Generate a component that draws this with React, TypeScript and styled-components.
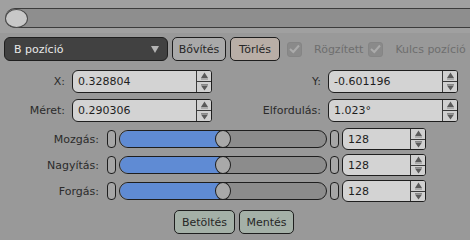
import React from "react";
import styled, { createGlobalStyle } from "styled-components";

const Global = createGlobalStyle`
  html, body { margin: 0; padding: 0; background: #999999; }
  body { font-family: "DejaVu Sans", sans-serif; font-size: 11px; color: #2b2b2b; }
  * { box-sizing: border-box; }
`;

const Page = styled.div`
  width: 470px;
  height: 240px;
  overflow: hidden;
  background: #999999;
`;

const Header = styled.div`
  background: #a0a0a0;
  padding: 8px 0 5px 5px;
`;

const Track = styled.div`
  height: 20px;
  background: #8e8e8e;
  border-top: 1px solid #3c3c3c;
  border-bottom: 1px solid #3c3c3c;
  border-radius: 10px 0 0 10px;
  display: flex;
  align-items: center;
`;

const Knob = styled.div`
  width: 23px;
  height: 19px;
  border-radius: 50%;
  background: #c8c8c8;
  border: 1px solid #4a4a4a;
`;

const Toolbar = styled.div`
  display: flex;
  align-items: center;
  padding: 4px 0 0 4px;
  height: 28px;
`;

const Dropdown = styled.div`
  width: 164px;
  height: 24px;
  background: #414141;
  border: 1px solid #1e1e1e;
  border-radius: 6px;
  color: #e8e8e8;
  display: flex;
  align-items: center;
  justify-content: space-between;
  padding: 0 8px 0 9px;
  margin-right: 2px;
`;

const Caret = styled.span`
  width: 0;
  height: 0;
  border-left: 4px solid transparent;
  border-right: 4px solid transparent;
  border-top: 7px solid #b4b4b4;
`;

const Button = styled.div<{ $tint: string; $w: number }>`
  width: ${(p) => p.$w}px;
  height: 24px;
  background: ${(p) => p.$tint};
  border: 1px solid #1e1e1e;
  border-radius: 5px;
  display: flex;
  align-items: center;
  justify-content: center;
  color: #262626;
  margin-left: 2px;
  margin-right: 2px;
`;

const Check = styled.label`
  display: flex;
  align-items: center;
  color: #6e6e6e;
  margin-left: 5px;
`;

const Box = styled.span`
  width: 15px;
  height: 15px;
  border-radius: 3px;
  background: #8a8a8a;
  border: 1px solid #858585;
  margin-right: 12px;
  display: flex;
  align-items: center;
  justify-content: center;
`;

const FormGrid = styled.div`
  display: grid;
  grid-template-columns: 65px 140px 102px 130px;
  column-gap: 7px;
  row-gap: 6px;
  margin-top: 9px;
  align-items: center;
`;

const Label = styled.span`
  text-align: right;
  color: #2b2b2b;
  white-space: nowrap;
`;

const SpinWrap = styled.div<{ $h: number }>`
  height: ${(p) => p.$h}px;
  display: flex;
  background: #d3d3d3;
  border: 1px solid #1e1e1e;
  border-radius: 6px 3px 3px 6px;
  overflow: hidden;
`;

const SpinText = styled.div`
  flex: 1;
  display: flex;
  align-items: center;
  padding-left: 5px;
  color: #1e1e1e;
`;

const SpinButtons = styled.div`
  width: 15px;
  border-left: 1px solid #3a3a3a;
  display: flex;
  flex-direction: column;
`;

const SpinHalf = styled.div<{ $top?: boolean }>`
  flex: 1;
  display: flex;
  align-items: center;
  justify-content: center;
  background: #d0d0d0;
  border-bottom: ${(p) => (p.$top ? "1px solid #3a3a3a" : "none")};
`;

const Sliders = styled.div`
  display: flex;
  flex-direction: column;
  gap: 4px;
  margin-top: 6px;
`;

const SliderRow = styled.div`
  display: flex;
  align-items: center;
  height: 22px;
`;

const SliderLabel = styled(Label)`
  width: 99px;
  flex: none;
`;

const Pill = styled.div<{ $ml: number }>`
  width: 9px;
  height: 18px;
  flex: none;
  margin-left: ${(p) => p.$ml}px;
  border: 1px solid #1e1e1e;
  border-radius: 4px;
  background: #a6a6a6;
`;

const SliderTrack = styled.div`
  width: 208px;
  height: 18px;
  flex: none;
  margin-left: 3px;
  border: 1px solid #1e1e1e;
  border-radius: 9px;
  background: #8c8c8c;
  position: relative;
  overflow: hidden;
`;

const Fill = styled.div`
  position: absolute;
  left: 0;
  top: 0;
  bottom: 0;
  background: #5f8bd4;
  border-radius: 9px 0 0 9px;
`;

const Thumb = styled.div`
  position: absolute;
  top: -1px;
  width: 16px;
  height: 18px;
  border-radius: 50%;
  background: #a9a9a9;
  border: 1px solid #1e1e1e;
`;

const SliderSpin = styled.div`
  width: 84px;
  flex: none;
  margin-left: 3px;
`;

const Footer = styled.div`
  display: flex;
  padding-left: 172px;
  margin-top: 8px;
`;

const Up = () => (
  <svg width="9" height="8" viewBox="0 0 9 8">
    <path d="M4.5 0.5 L8 6 L1 6 Z" fill="#5a5a5a" />
    <rect x="1" y="6.5" width="7" height="1" fill="#888" />
  </svg>
);
const Down = () => (
  <svg width="9" height="7" viewBox="0 0 9 7">
    <rect x="1" y="0" width="7" height="1" fill="#888" />
    <path d="M1 1.5 L8 1.5 L4.5 6.5 Z" fill="#5a5a5a" />
  </svg>
);

const Tick = () => (
  <svg width="11" height="10" viewBox="0 0 11 10">
    <path d="M1 5 L4.3 8 L10 1.5" stroke="#ababab" strokeWidth="2" fill="none" />
  </svg>
);

const Spin: React.FC<{ value: string; h?: number }> = ({ value, h = 23 }) => (
  <SpinWrap $h={h}>
    <SpinText>{value}</SpinText>
    <SpinButtons>
      <SpinHalf $top>
        <Up />
      </SpinHalf>
      <SpinHalf>
        <Down />
      </SpinHalf>
    </SpinButtons>
  </SpinWrap>
);

const sliders = [
  { label: "Mozgás:", value: 128 },
  { label: "Nagyítás:", value: 128 },
  { label: "Forgás:", value: 128 },
];

const TRACK_INNER = 206;
const THUMB = 16;

export default function App() {
  return (
    <Page>
      <Global />
      <Header>
        <Track>
          <Knob />
        </Track>
      </Header>
      <Toolbar>
        <Dropdown>
          <span>B pozíció</span>
          <Caret />
        </Dropdown>
        <Button $tint="#a9a9a9" $w={54}>Bővítés</Button>
        <Button $tint="#b9aea6" $w={50}>Törlés</Button>
        <Check>
          <Box>
            <Tick />
          </Box>
          Rögzített
        </Check>
        <Check>
          <Box>
            <Tick />
          </Box>
          Kulcs pozíció
        </Check>
      </Toolbar>
      <FormGrid>
        <Label>X:</Label>
        <Spin value="0.328804" />
        <Label>Y:</Label>
        <Spin value="-0.601196" />
        <Label>Méret:</Label>
        <Spin value="0.290306" />
        <Label>Elfordulás:</Label>
        <Spin value="1.023°" />
      </FormGrid>
      <Sliders>
        {sliders.map((s) => {
          const left = Math.round(((TRACK_INNER - THUMB) * s.value) / 255);
          return (
            <SliderRow key={s.label}>
              <SliderLabel>{s.label}</SliderLabel>
              <Pill $ml={8} />
              <SliderTrack>
                <Fill style={{ width: left + THUMB / 2 }} />
                <Thumb style={{ left }} />
              </SliderTrack>
              <Pill $ml={3} />
              <SliderSpin>
                <Spin value={String(s.value)} h={22} />
              </SliderSpin>
            </SliderRow>
          );
        })}
      </Sliders>
      <Footer>
        <Button $tint="#a4b0a7" $w={61}>Betöltés</Button>
        <Button $tint="#a4b0a7" $w={55}>Mentés</Button>
      </Footer>
    </Page>
  );
}
